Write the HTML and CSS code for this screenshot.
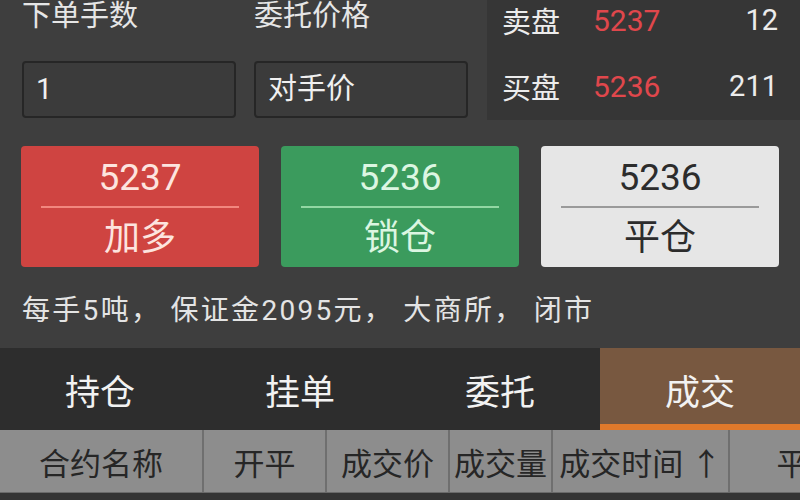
FILE: index.html
```html
<!DOCTYPE html>
<html lang="zh-CN">
<head>
<meta charset="utf-8">
<title>交易</title>
<link rel="stylesheet" href="styles.css">
</head>
<body>
<div class="page">
  <div class="top">
    <div class="form">
      <div class="field">
        <div class="label">下单手数</div>
        <div class="input">1</div>
      </div>
      <div class="field">
        <div class="label">委托价格</div>
        <div class="input">对手价</div>
      </div>
    </div>
    <div class="quote">
      <div class="qrow">
        <span class="qlabel">卖盘</span>
        <span class="qprice">5237</span>
        <span class="qvol">12</span>
      </div>
      <div class="qrow second">
        <span class="qlabel">买盘</span>
        <span class="qprice">5236</span>
        <span class="qvol">211</span>
      </div>
    </div>
  </div>

  <div class="actions">
    <div class="btn red">
      <div class="bprice">5237</div>
      <div class="bline"></div>
      <div class="bname">加多</div>
    </div>
    <div class="btn green">
      <div class="bprice">5236</div>
      <div class="bline"></div>
      <div class="bname">锁仓</div>
    </div>
    <div class="btn white">
      <div class="bprice">5236</div>
      <div class="bline"></div>
      <div class="bname">平仓</div>
    </div>
  </div>

  <div class="info">每手5吨， 保证金2095元， 大商所， 闭市</div>

  <div class="tabs">
    <div class="tab">持仓</div>
    <div class="tab">挂单</div>
    <div class="tab">委托</div>
    <div class="tab active">成交</div>
  </div>

  <div class="thead">
    <div class="th c1">合约名称</div>
    <div class="th c2">开平</div>
    <div class="th c3">成交价</div>
    <div class="th c4">成交量</div>
    <div class="th c5">成交时间 ↑</div>
    <div class="th c6">平</div>
  </div>
  <div class="tbody"></div>
</div>
</body>
</html>
```
FILE: styles.css
```css
* { box-sizing: border-box; }
html, body {
  margin: 0;
  padding: 0;
  background: #3e3e3e;
}
body {
  font-family: "Roboto", "Noto Sans CJK SC", sans-serif;
  color: #ececec;
}
.page {
  width: 800px;
  height: 500px;
  overflow: hidden;
  display: flex;
  flex-direction: column;
}
.top {
  display: flex;
  height: 120px;
}
.form {
  width: 487px;
  display: flex;
  gap: 18px;
  padding-left: 22px;
}
.field {
  width: 214px;
  display: flex;
  flex-direction: column;
}
.label {
  font-size: 29px;
  line-height: 32px;
  height: 61px;
  color: #e6e6e6;
}
.input {
  height: 57px;
  border: 2px solid #262626;
  border-radius: 4px;
  background: #3b3b3b;
  font-size: 29px;
  line-height: 53px;
  padding-left: 12px;
  color: #f0f0f0;
}
.quote {
  flex: 1;
  background: #363636;
  padding: 0 22px 0 15px;
}
.qrow {
  display: flex;
  align-items: center;
  height: 40px;
}
.qrow.second { margin-top: 26px; }
.qlabel {
  font-size: 29px;
  width: 91px;
  color: #ececec;
}
.qprice {
  font-size: 30px;
  color: #e0474c;
}
.qvol {
  margin-left: auto;
  font-size: 29px;
  color: #ececec;
}
.actions {
  display: flex;
  gap: 22px;
  padding: 0 21px;
  margin-top: 26px;
}
.btn {
  width: 238px;
  height: 121px;
  border-radius: 4px;
  display: flex;
  flex-direction: column;
  align-items: center;
  padding: 0 20px;
}
.bprice {
  font-size: 37px;
  line-height: 40px;
  margin-top: 12px;
}
.bline {
  align-self: stretch;
  height: 2px;
  margin-top: 8px;
}
.bname {
  font-size: 36px;
  line-height: 40px;
  margin-top: 10px;
}
.red { background: #cf4441; color: #fde4df; }
.red .bline { background: #f2877e; }
.green { background: #3b9b5d; color: #dcf6e2; }
.green .bline { background: #92d7a3; }
.white { background: #e6e6e6; color: #2c2c2c; }
.white .bline { background: #9a9a9a; }
.info {
  padding-left: 22px;
  height: 81px;
  display: flex;
  align-items: center;
  font-size: 28px;
  letter-spacing: 2.3px;
  color: #e4e4e4;
  white-space: pre;
}
.tabs {
  display: flex;
  height: 82px;
  background: #2d2d2d;
}
.tab {
  width: 200px;
  display: flex;
  align-items: center;
  justify-content: center;
  font-size: 35px;
  color: #f2f2f2;
}
.tab.active {
  background: #785840;
  border-bottom: 6px solid #e0792b;
  padding-top: 6px;
}
.thead {
  display: flex;
  height: 63px;
  background: #8d8d8d;
  border-bottom: 1px solid #6a6a6a;
}
.th {
  display: flex;
  align-items: center;
  justify-content: center;
  font-size: 31px;
  color: #262626;
  border-right: 2px solid #6f6f6f;
  flex-shrink: 0;
  white-space: nowrap;
}
.c1 { width: 204px; }
.c2 { width: 123px; }
.c3 { width: 123px; }
.c4 { width: 103px; }
.c5 { width: 177px; }
.c6 { width: 124px; border-right: none; }
.tbody {
  flex: 1;
  background: #343434;
}
```
